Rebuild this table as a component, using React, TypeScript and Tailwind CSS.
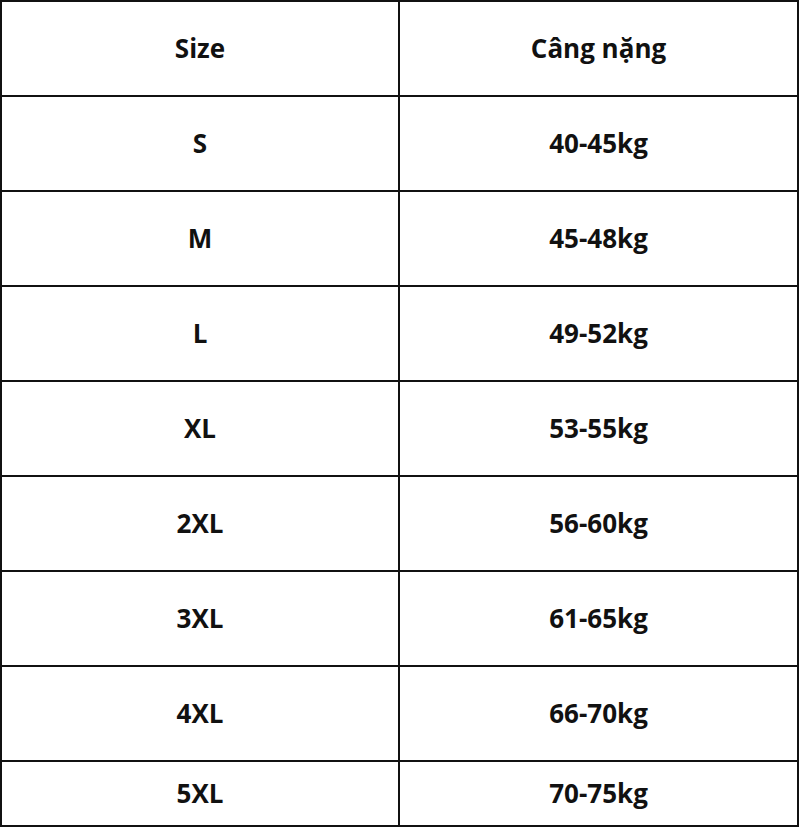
import React from "react";

const rows: [string, string][] = [
  ["S", "40-45kg"],
  ["M", "45-48kg"],
  ["L", "49-52kg"],
  ["XL", "53-55kg"],
  ["2XL", "56-60kg"],
  ["3XL", "61-65kg"],
  ["4XL", "66-70kg"],
  ["5XL", "70-75kg"],
];

export default function App() {
  const all: [string, string][] = [["Size", "Câng nặng"], ...rows];
  return (
    <div className="w-[800px] h-[827px] bg-white">
      <div
        className="w-[799px] h-[827px] border-2 border-[#111] flex flex-col text-[#111] font-bold text-[26px]"
        style={{ fontFamily: '"Open Sans", "Noto Sans", sans-serif' }}
      >
        {all.map(([a, b], i) => {
          const last = i === all.length - 1;
          return (
            <div
              key={i}
              className={
                last
                  ? "flex flex-1 min-h-0"
                  : "flex h-[95px] shrink-0 border-b-2 border-[#111]"
              }
            >
              <div className="w-[398px] border-r-2 border-[#111] flex items-center justify-center">
                {a}
              </div>
              <div className="flex-1 flex items-center justify-center">
                {b}
              </div>
            </div>
          );
        })}
      </div>
    </div>
  );
}
